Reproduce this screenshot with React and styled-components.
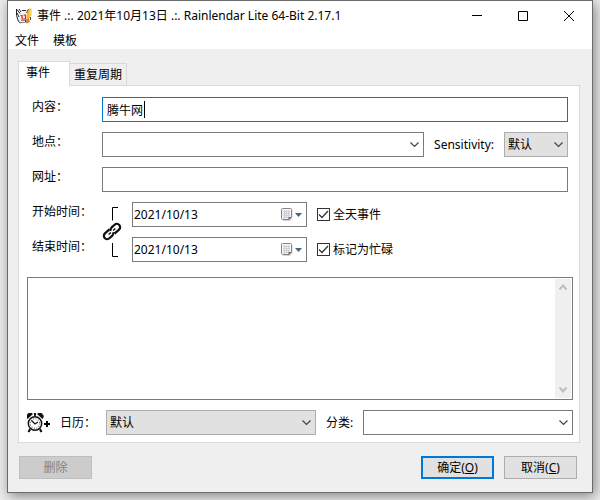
import React, { useState } from 'react'
import styled, { createGlobalStyle, css } from 'styled-components'

const colors = {
	ink: '#000',
	frame: '#6b6b6b',
	face: '#efefef',
	line: '#d9d9d9',
	field: '#7a7a7a',
	button: '#e1e1e1',
	buttonBorder: '#adadad',
	accent: '#0078d7',
}

const GlobalStyle = createGlobalStyle`
	*, *:before, *:after{ box-sizing: border-box; }
	body{
		margin: 0;
		background: #ececec;
		color: ${colors.ink};
		font: 12px/18px "Noto Sans", "Noto Sans CJK SC", sans-serif;
	}
	button, input, select, textarea{
		font: inherit;
		color: inherit;
		margin: 0;
		padding: 0;
		border-radius: 0;
	}
	svg{ display: block; }
`

const Desktop = styled.div`
	padding: 0 7px 7px;
	overflow: hidden;
`

const Window = styled.main`
	background: ${colors.face};
	border: 1px solid ${colors.frame};
	box-shadow: 2px 3px 12px rgba(0, 0, 0, 0.45);
`

const TitleBar = styled.header`
	display: flex;
	align-items: center;
	height: 30px;
	padding-left: 8px;
	background: #fff;
`

const Title = styled.h1`
	flex: 1;
	margin: 0 0 0 5px;
	font-size: 12px;
	font-weight: 400;
	white-space: nowrap;
`

const Caption = styled.button`
	display: flex;
	align-items: center;
	justify-content: center;
	width: 46px;
	height: 28px;
	background: none;
	border: none;
	&:hover{ background: #e5e5e5; }
`

const MenuBar = styled.nav`
	display: flex;
	gap: 14px;
	height: 18px;
	padding-left: 7px;
	background: #fff;
`

const MenuItem = styled.button`
	height: 20px;
	background: none;
	border: none;
`

const Content = styled.div`
	padding: 12px 12px 13px 10px;
`

const Tabs = styled.div`
	display: flex;
	align-items: flex-end;
`

const Tab = styled.button`
	height: 22px;
	padding: 0 4px;
	background: ${colors.face};
	border: 1px solid ${colors.line};
	border-width: 1px 1px 0 0;
	${p => p.$active && css`
		position: relative;
		height: 25px;
		margin-bottom: -1px;
		padding: 0 19px 3px 7px;
		background: #fff;
		border-left-width: 1px;
	`}
`

const Panel = styled.section`
	padding: 11px 6px 7px 8px;
	background: #fff;
	border: 1px solid ${colors.line};
`

const Rows = styled.div`
	display: flex;
	flex-direction: column;
	gap: 10px;
	padding: 0 5px;
`

const Row = styled.div`
	display: flex;
	align-items: center;
`

const Label = styled.label`
	align-self: flex-start;
	width: 70px;
	line-height: 20px;
	white-space: nowrap;
`

const InlineLabel = styled.label`
	margin: 0 10px;
	white-space: nowrap;
`

const Field = styled.div`
	flex: 1;
	display: flex;
	align-items: center;
	position: relative;
	min-width: 0;
	height: 25px;
	background: #fff;
	border: 1px solid ${p => p.$focused ? colors.accent : colors.field};
`

const Input = styled.input`
	flex: 1;
	min-width: 0;
	height: 100%;
	padding-left: ${p => p.$indent || '1px'};
	background: none;
	border: none;
	outline: none;
`

const Caret = styled.span`
	position: absolute;
	left: 41px;
	top: 3px;
	width: 1px;
	height: 17px;
	background: ${colors.ink};
`

const DropButton = styled.button`
	display: flex;
	align-items: center;
	gap: 2px;
	margin-right: 4px;
	background: none;
	border: none;
`

const SelectBox = styled.div`
	flex: ${p => p.$width ? `0 0 ${p.$width}` : 1};
	display: grid;
	align-items: center;
	height: 25px;
	background: ${colors.button};
	border: 1px solid ${colors.buttonBorder};
	& > *{ grid-area: 1 / 1; }
	& > svg{
		justify-self: end;
		margin-right: 4px;
		pointer-events: none;
	}
`

const Select = styled.select`
	appearance: none;
	width: 100%;
	height: 100%;
	padding-left: 3px;
	background: none;
	border: none;
	outline: none;
`

const TimeGrid = styled.div`
	display: grid;
	grid-template-columns: 70px 30px 175px 1fr;
	row-gap: 10px;
	align-items: center;
`

const LinkCell = styled.div`
	grid-column: 2;
	grid-row: 1 / 3;
`

const CheckLabel = styled.label`
	display: flex;
	align-items: center;
	gap: 3px;
	margin-left: 10px;
`

const CheckBox = styled.span`
	display: grid;
	width: 13px;
	height: 13px;
	border: 1px solid #333;
	& > *{ grid-area: 1 / 1; }
`

const CheckInput = styled.input`
	appearance: none;
	width: 11px;
	height: 11px;
	& + svg{
		visibility: hidden;
		pointer-events: none;
	}
	&:checked + svg{ visibility: visible; }
`

const Notes = styled.div`
	display: flex;
	height: 123px;
	margin: 15px 0 10px;
	padding: 1px;
	border: 1px solid ${colors.field};
`

const NotesText = styled.textarea`
	flex: 1;
	min-width: 0;
	resize: none;
	overflow: hidden;
	background: none;
	border: none;
	outline: none;
`

const ScrollBar = styled.div`
	display: flex;
	flex-direction: column;
	justify-content: space-between;
	align-items: center;
	width: 16px;
	padding: 5px 0;
	background: #f0f0f0;
`

const AlarmButton = styled.button`
	background: none;
	border: none;
	margin-right: 10px;
`

const CalendarLabel = styled.label`
	width: 46px;
	white-space: nowrap;
`

const Footer = styled.footer`
	display: flex;
	gap: 10px;
	padding: 13px 3px 0 1px;
`

const Button = styled.button`
	width: 73px;
	height: 23px;
	background: ${colors.button};
	border: 1px solid ${colors.buttonBorder};
	${p => p.$primary && css`
		margin-left: auto;
		border: 2px solid ${colors.accent};
	`}
	&:disabled{
		color: #838383;
		background: #ccc;
		border-color: #bfbfbf;
	}
`

const AppIcon = () => (
	<svg width="16" height="16" viewBox="0 0 16 16" aria-hidden="true">
		<path d="M1 4l10-2 2 10-9 3z" fill="#f4f4f4"/>
		<path d="M0.5 1v6.500l2 6 2 1.500M1 1.500l3 4M3 1l2 3M1 5l2 4M6 2.500h4" fill="none" stroke="#222"/>
		<path d="M4 14.5h5M5 12.500h4" stroke="#888"/>
		<path d="M4.5 7.500h1.500v3M7.500 7h2v4h-4" fill="none" stroke="#e01818" strokeWidth="1.200"/>
		<path d="M11 5l3-5 1.500 1v6l-3 4-2-1z" fill="#f8b820"/>
		<path d="M13.500 1.500l1.500 1v4l-1.500 2z" fill="#ffd75a"/>
		<path d="M10 11l3-1 1 4-3 1.500-2-1z" fill="#d98338"/>
		<path d="M12.500 1l-2 4M14.500 9v3M9.500 12v2" stroke="#444"/>
	</svg>
)

const Chevron = () => (
	<svg width="9" height="6" viewBox="0 0 9 6" aria-hidden="true">
		<path d="M0.500 0.500l4 4 4-4" fill="none" stroke="#444" strokeWidth="1.200"/>
	</svg>
)

const ScrollArrow = ({up}) => (
	<svg width="8" height="7" viewBox="0 0 8 7" aria-hidden="true">
		<path d={up ? 'M0.500 5.500l3.500-4 3.500 4' : 'M0.500 1.500l3.500 4 3.500-4'} fill="none" stroke="#bdbdbd" strokeWidth="2"/>
	</svg>
)

const CalendarIcon = () => (
	<svg width="12" height="13" viewBox="0 0 12 13" aria-hidden="true">
		<path d="M2 2h9.500v8l-2.500 3H2z" fill="#d6d2d2"/>
		<path d="M1.500 0.500h8q1 0 1 1v7.500l-2.500 2.500h-6.500q-1 0-1-1v-9q0-1 1-1z" fill="#f6f4f4" stroke="#8f8484"/>
		<path d="M2 3.500h7M2 5.500h7M2 7.500h7M2 9.500h5M3.500 2v8.500M5.500 2v8.500M7.500 2v8" stroke="#cfd1da"/>
		<path d="M7.500 12V9h3z" fill="#6a6064"/>
	</svg>
)

const Triangle = () => (
	<svg width="7" height="4" viewBox="0 0 7 4" aria-hidden="true">
		<path d="M0 0h7l-3.500 4z" fill="#48628c"/>
	</svg>
)

const LinkIcon = () => (
	<svg width="30" height="60" viewBox="0 0 30 60" aria-hidden="true">
		<path d="M16 5.500h-5.500v13M10.500 41v13.500h5.500" fill="none" stroke="#000"/>
		<g transform="translate(10 29.500) rotate(-42)" fill="none" stroke="#111" strokeWidth="2.200">
			<path d="M-0.500 -3.300h-6a3.300 3.300 0 0 0 0 6.600h4a3.300 3.300 0 0 0 3-2"/>
			<path d="M0.500 3.300h6a3.300 3.300 0 0 0 0-6.600h-4a3.300 3.300 0 0 0-3 2"/>
			<path d="M-4.500 0h3M1.500 0h3" strokeWidth="1.400"/>
		</g>
	</svg>
)

const AlarmIcon = () => (
	<svg width="23" height="20" viewBox="0 0 23 20" aria-hidden="true">
		<path d="M0.500 6a3.500 3.500 0 0 1 5.500-5zM15.500 6a3.500 3.500 0 0 0-5.500-5z" fill="#111"/>
		<path d="M7 1h2M8 0.500v3" stroke="#111" strokeWidth="2"/>
		<path d="M3.500 15.500l-2 3.500M12.500 15.500l2 3.500" stroke="#111" strokeWidth="2.200"/>
		<circle cx="8" cy="10.500" r="7.200" fill="#fff" stroke="#fff"/>
		<circle cx="8" cy="10.500" r="6.700" fill="#fff" stroke="#111" strokeWidth="1.500"/>
		<circle cx="8" cy="10.500" r="4.800" fill="none" stroke="#666" strokeWidth="1.200" strokeDasharray="1 1.513"/>
		<path d="M4.500 7.500l3.500 3.500 3-2" fill="none" stroke="#111" strokeWidth="1.300"/>
		<path d="M17 11h6M20 8v6" stroke="#000" strokeWidth="2"/>
	</svg>
)

const Combo = ({id, label}) => (
	<Field>
		<Input id={id} type="text"/>
		<DropButton type="button" aria-label={label}><Chevron/></DropButton>
	</Field>
)

const Dropdown = ({id, width}) => (
	<SelectBox $width={width}>
		<Select id={id}><option>默认</option></Select>
		<Chevron/>
	</SelectBox>
)

const DateField = ({id}) => (
	<Field>
		<Input id={id} type="text" defaultValue="2021/10/13"/>
		<DropButton type="button" aria-label="选择日期"><CalendarIcon/><Triangle/></DropButton>
	</Field>
)

const Check = ({children}) => (
	<CheckLabel>
		<CheckBox>
			<CheckInput type="checkbox" defaultChecked/>
			<svg width="11" height="11" viewBox="0 0 11 11" aria-hidden="true">
				<path d="M1 5.500l3 3 6-6.500" fill="none" stroke="#333" strokeWidth="1.300"/>
			</svg>
		</CheckBox>
		{children}
	</CheckLabel>
)

const App = () => {
	const [summary, setSummary] = useState('腾牛网')
	return (
		<Desktop>
			<GlobalStyle/>
			<Window>
				<TitleBar>
					<AppIcon/>
					<Title>事件 .:. 2021年10月13日 .:. Rainlendar Lite 64-Bit 2.17.1</Title>
					<Caption aria-label="最小化">
						<svg width="10" height="10" viewBox="0 0 10 10"><path d="M0 4.500h10" stroke="#000"/></svg>
					</Caption>
					<Caption aria-label="最大化">
						<svg width="10" height="10" viewBox="0 0 10 10"><path d="M0.500 0.500h9v9h-9z" fill="none" stroke="#000"/></svg>
					</Caption>
					<Caption aria-label="关闭">
						<svg width="10" height="10" viewBox="0 0 10 10"><path d="M0 0l10 10M10 0l-10 10" stroke="#000"/></svg>
					</Caption>
				</TitleBar>
				<MenuBar>
					<MenuItem>文件</MenuItem>
					<MenuItem>模板</MenuItem>
				</MenuBar>
				<Content>
					<Tabs role="tablist">
						<Tab role="tab" aria-selected="true" $active>事件</Tab>
						<Tab role="tab" aria-selected="false">重复周期</Tab>
					</Tabs>
					<Panel role="tabpanel">
						<Rows>
							<Row>
								<Label htmlFor="summary">内容：</Label>
								<Field $focused>
									<Input id="summary" type="text" $indent="4px" value={summary} onChange={e => setSummary(e.target.value)}/>
									<Caret/>
								</Field>
							</Row>
							<Row>
								<Label htmlFor="location">地点：</Label>
								<Combo id="location" label="选择地点"/>
								<InlineLabel htmlFor="sensitivity">Sensitivity:</InlineLabel>
								<Dropdown id="sensitivity" width="64px"/>
							</Row>
							<Row>
								<Label htmlFor="url">网址：</Label>
								<Field><Input id="url" type="text"/></Field>
							</Row>
							<TimeGrid>
								<Label htmlFor="start">开始时间：</Label>
								<LinkCell><LinkIcon/></LinkCell>
								<DateField id="start"/>
								<Check>全天事件</Check>
								<Label htmlFor="end">结束时间：</Label>
								<DateField id="end"/>
								<Check>标记为忙碌</Check>
							</TimeGrid>
						</Rows>
						<Notes>
							<NotesText aria-label="备注"/>
							<ScrollBar>
								<ScrollArrow up/>
								<ScrollArrow/>
							</ScrollBar>
						</Notes>
						<Row>
							<AlarmButton type="button" aria-label="添加提醒"><AlarmIcon/></AlarmButton>
							<CalendarLabel htmlFor="calendar">日历：</CalendarLabel>
							<Dropdown id="calendar"/>
							<InlineLabel htmlFor="category">分类:</InlineLabel>
							<Combo id="category" label="选择分类"/>
						</Row>
					</Panel>
					<Footer>
						<Button type="button" disabled>删除</Button>
						<Button type="button" $primary>确定(<u>O</u>)</Button>
						<Button type="button">取消(<u>C</u>)</Button>
					</Footer>
				</Content>
			</Window>
		</Desktop>
	)
}

export default App
